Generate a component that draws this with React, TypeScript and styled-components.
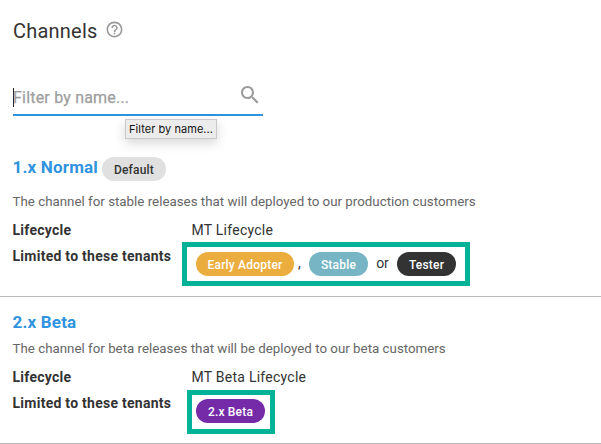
import React from 'react';
import styled, { createGlobalStyle } from 'styled-components';

const GlobalStyle = createGlobalStyle`
  * { box-sizing: border-box; }
  body {
    margin: 0;
    background: #fff;
    color: #333;
    font-family: Roboto, "Liberation Sans", sans-serif;
    overflow: hidden;
  }
`;

const Page = styled.main`
  width: 601px;
  height: 444px;
  display: flex;
  flex-direction: column;
  background: #fff;
`;

const Header = styled.header`
  display: flex;
  align-items: center;
  gap: 7px;
  height: 62px;
  padding-left: 13px;
`;

const Title = styled.h1`
  margin: 0;
  font-size: 20px;
  line-height: 24px;
  font-weight: 400;
  letter-spacing: 0.22px;
`;

const HelpIcon = styled.svg`
  width: 19px;
  height: 19px;
  margin-top: -3px;
  color: #999;
`;

const SearchField = styled.div`
  position: relative;
  display: flex;
  justify-content: space-between;
  width: 250px;
  height: 36px;
  margin: 18px 0 0 13px;
  border-bottom: 2px solid #2f93e0;
`;

const Placeholder = styled.span`
  height: 19px;
  margin-top: 8px;
  border-left: 1px solid #222;
  color: #9e9e9e;
  font-size: 16px;
  line-height: 19px;
  letter-spacing: 0.2px;
  text-indent: -1px;
  -webkit-text-stroke: 0.25px #9e9e9e;
  white-space: nowrap;
`;

const SearchIcon = styled.svg`
  width: 24px;
  height: 24px;
  margin: 3px 1px 0 0;
  color: #9a9a9a;
`;

const Tooltip = styled.div`
  position: absolute;
  left: 112px;
  top: 39px;
  width: 92px;
  height: 20px;
  padding-left: 3px;
  border: 1px solid #c9c9c9;
  background: #ececec;
  box-shadow: 0 4px 12px rgba(0, 0, 0, 0.16);
  color: #111;
  font-size: 11px;
  line-height: 19px;
  letter-spacing: 0.05px;
  font-family: Inter, sans-serif;
  white-space: nowrap;
`;

const Channel = styled.section<{ $height: number; $top: number }>`
  height: ${(p) => p.$height}px;
  padding: ${(p) => p.$top}px 0 0 12.5px;
  border-bottom: 1px solid #b9b9b9;
`;

const NameRow = styled.div<{ $height: number }>`
  display: flex;
  align-items: flex-start;
  gap: 4px;
  height: ${(p) => p.$height}px;
`;

const Name = styled.h2`
  margin: 0;
  color: #2f93e0;
  font-size: 17px;
  line-height: 20px;
  font-weight: 700;
  letter-spacing: 0.18px;
`;

const Chip = styled.span<{ $bg: string; $fg?: string; $width: number }>`
  flex: none;
  width: ${(p) => p.$width}px;
  height: 24px;
  border-radius: 12px;
  background: ${(p) => p.$bg};
  color: ${(p) => p.$fg ?? '#fff'};
  font-size: 12px;
  line-height: 26px;
  font-weight: 500;
  letter-spacing: 0.2px;
  text-align: center;
  white-space: nowrap;
`;

const Description = styled.p`
  margin: 0 0 11px;
  color: #666;
  font-size: 13.33px;
  line-height: 16px;
  white-space: nowrap;
`;

const Property = styled.div`
  display: flex;
  height: 26px;
`;

const Label = styled.span`
  flex: none;
  width: 179px;
  font-size: 14px;
  line-height: 19px;
  font-weight: 700;
  letter-spacing: 0.26px;
`;

const Value = styled.span`
  font-size: 14px;
  line-height: 18px;
  letter-spacing: 0.25px;
  white-space: nowrap;
`;

const TenantBox = styled.div<{ $width: number; $shift: number; $raise: number; $top: number }>`
  flex: none;
  display: flex;
  align-items: flex-start;
  width: ${(p) => p.$width}px;
  height: 44px;
  margin: -${(p) => p.$raise}px 0 0 -${(p) => p.$shift}px;
  padding: ${(p) => p.$top}px 0 0 ${(p) => p.$shift - 0.5}px;
  border: 5px solid #00b398;
  background: #fff;
`;

const Joiner = styled.span<{ $width: number; $align?: string }>`
  flex: none;
  width: ${(p) => p.$width}px;
  padding-left: ${(p) => (p.$align === 'left' ? 4 : 0)}px;
  font-size: 14px;
  line-height: 22px;
  text-align: ${(p) => p.$align ?? 'center'};
`;

export default function App() {
  return (
    <>
      <GlobalStyle />
      <Page>
        <Header>
          <Title>Channels</Title>
          <HelpIcon viewBox="0 0 24 24" fill="currentColor">
            <path d="M11 18h2v-2h-2v2zm1-16C6.48 2 2 6.48 2 12s4.48 10 10 10 10-4.48 10-10S17.52 2 12 2zm0 18c-4.41 0-8-3.59-8-8s3.59-8 8-8 8 3.59 8 8-3.59 8-8 8zm0-14c-2.21 0-4 1.79-4 4h2c0-1.1.9-2 2-2s2 .9 2 2c0 2-3 1.75-3 5h2c0-2.25 3-2.5 3-5 0-2.21-1.79-4-4-4z" />
          </HelpIcon>
        </Header>

        <SearchField>
          <Placeholder>Filter by name...</Placeholder>
          <SearchIcon viewBox="0 0 24 24" fill="currentColor">
            <path d="M15.5 14h-.79l-.28-.27C15.41 12.59 16 11.11 16 9.5 16 5.91 13.09 3 9.5 3S3 5.91 3 9.5 5.91 16 9.5 16c1.61 0 3.09-.59 4.23-1.57l.27.28v.79l5 4.99L20.49 19l-4.99-5zm-6 0C7.01 14 5 11.99 5 9.5S7.01 5 9.5 5 14 7.01 14 9.5 11.99 14 9.5 14z" />
          </SearchIcon>
          <Tooltip>Filter by name...</Tooltip>
        </SearchField>

        <Channel $height={181} $top={41}>
          <NameRow $height={37}>
            <Name>1.x Normal</Name>
            <Chip $bg="#e0e0e0" $fg="#333" $width={64}>Default</Chip>
          </NameRow>
          <Description>The channel for stable releases that will deployed to our production customers</Description>
          <Property>
            <Label>Lifecycle</Label>
            <Value>MT Lifecycle</Value>
          </Property>
          <Property>
            <Label>Limited to these tenants</Label>
            <TenantBox $width={288} $shift={9.5} $raise={5} $top={5}>
              <Chip $bg="#ecad3f" $width={98}>Early Adopter</Chip>
              <Joiner $width={15} $align="left">,</Joiner>
              <Chip $bg="#77b5c5" $width={59}>Stable</Chip>
              <Joiner $width={29}>or</Joiner>
              <Chip $bg="#333" $width={59}>Tester</Chip>
            </TenantBox>
          </Property>
        </Channel>

        <Channel $height={147} $top={15}>
          <NameRow $height={29}>
            <Name>2.x Beta</Name>
          </NameRow>
          <Description>The channel for beta releases that will be deployed to our beta customers</Description>
          <Property>
            <Label>Lifecycle</Label>
            <Value>MT Beta Lifecycle</Value>
          </Property>
          <Property>
            <Label>Limited to these tenants</Label>
            <TenantBox $width={88} $shift={4.5} $raise={4} $top={4}>
              <Chip $bg="#752ba8" $width={69}>2.x Beta</Chip>
            </TenantBox>
          </Property>
        </Channel>
      </Page>
    </>
  );
}
